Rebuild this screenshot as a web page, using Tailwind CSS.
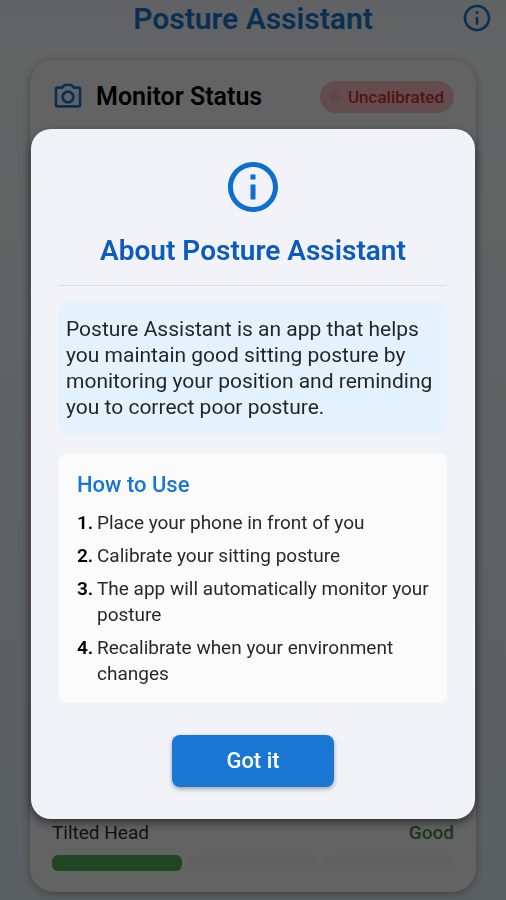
<!DOCTYPE html>
<html lang="en">

<head>
    <meta charset="utf-8">
    <meta name="viewport" content="width=device-width, initial-scale=1">
    <title>Posture Assistant</title>
    <script src="https://cdn.jsdelivr.net/npm/@tailwindcss/browser@4"></script>
</head>

<body class="font-[Roboto,sans-serif] text-black">
    <div class="min-h-screen flex flex-col bg-linear-to-b from-[#fafafa] to-[#e1eef2]">
        <header class="relative flex items-start justify-center h-[52px] bg-linear-to-b from-[#eef4fa] to-[#fafbfc]">
            <h1 class="text-[30px] leading-[38px] font-semibold text-[#1976d2]">Posture Assistant</h1>
            <button type="button" aria-label="About" class="absolute right-[13px] top-0.5">
                <svg class="size-8 text-[#1976d2]" viewBox="0 0 24 24" fill="currentColor">
                    <path d="M11 7h2v2h-2zm0 4h2v6h-2zm1-9C6.48 2 2 6.48 2 12s4.48 10 10 10 10-4.48 10-10S17.52 2 12 2zm0 18c-4.41 0-8-3.59-8-8s3.59-8 8-8 8 3.59 8 8-3.59 8-8 8z"></path>
                </svg>
            </button>
        </header>

        <main class="flex-1 flex flex-col px-[30px] pt-2 pb-2">
            <section class="flex-1 flex flex-col rounded-3xl bg-[#f8f8fb] shadow-[0_2px_8px_rgba(0,0,0,0.3)] px-[22px] py-[21px]">
                <div class="flex items-center">
                    <svg class="size-8 text-[#1976d2]" viewBox="0 0 24 24" fill="currentColor">
                        <path d="M14.12 4l1.83 2H20v12H4V6h4.05l1.83-2h4.24M15 2H9L7.17 4H4c-1.1 0-2 .9-2 2v12c0 1.1.9 2 2 2h16c1.1 0 2-.9 2-2V6c0-1.1-.9-2-2-2h-3.17L15 2zm-3 7c1.65 0 3 1.35 3 3s-1.35 3-3 3-3-1.35-3-3 1.35-3 3-3m0-2c-2.76 0-5 2.24-5 5s2.24 5 5 5 5-2.24 5-5-2.24-5-5-5z"></path>
                    </svg>
                    <h2 class="ml-3 text-[25px] leading-8 font-semibold">Monitor Status</h2>
                    <span class="ml-auto flex items-center gap-2 rounded-full bg-[#f8bfc3] px-2.5 py-1 text-[17px] leading-6 font-medium text-[#d32f2f]">
                        <span class="size-2.5 rounded-full bg-[#eeaeb2]"></span>
                        Uncalibrated
                    </span>
                </div>

                <div class="mt-auto">
                    <div class="flex justify-between text-[19px] leading-6">
                        <span class="text-black/85">Tilted Head</span>
                        <span class="font-medium text-[#388e3c]">Good</span>
                    </div>
                    <div class="mt-2.5 grid grid-cols-3 gap-1.5">
                        <div class="h-4 rounded-md bg-[#4caf50]"></div>
                        <div class="h-4 rounded-md bg-[#f3f3f3]"></div>
                        <div class="h-4 rounded-md bg-[#f3f3f3]"></div>
                    </div>
                </div>
            </section>
        </main>
    </div>

    <!-- About dialog -->
    <div class="fixed inset-0 flex items-center justify-center bg-black/60 px-[31px] pt-12">
        <div role="dialog" aria-modal="true" aria-labelledby="about-title"
            class="w-full rounded-[20px] bg-[#f2f3f9] px-7 pt-[30px] pb-8 shadow-[0_4px_10px_rgba(0,0,0,0.5)]">
            <svg class="mx-auto size-[60px] -my-0.5 text-[#0d6fd0]" viewBox="0 0 24 24" fill="currentColor">
                <path d="M11 7h2v2h-2zm0 4h2v6h-2zm1-9C6.48 2 2 6.48 2 12s4.48 10 10 10 10-4.48 10-10S17.52 2 12 2zm0 18c-4.41 0-8-3.59-8-8s3.59-8 8-8 8 3.59 8 8-3.59 8-8 8z"></path>
            </svg>
            <h2 id="about-title" class="mt-4 text-center text-[28px] leading-10 font-semibold text-[#0d5bbd]">About Posture Assistant</h2>
            <hr class="mt-3.5 border-[#dcdde2]">

            <p class="mt-[17px] rounded-xl bg-[#e3f2fd] px-[7px] py-[13px] text-[21px] leading-[26px] text-black/85">
                Posture Assistant is an app that helps you maintain good sitting posture by monitoring your position and reminding you to correct poor posture.
            </p>

            <div class="mt-5 rounded-lg bg-[#fbfbfb] px-[18px] py-4">
                <h3 class="text-[22px] leading-8 font-medium text-[#1976d2]">How to Use</h3>
                <ol class="mt-[9px] flex flex-col gap-[7px] text-[19px] leading-[26px] text-black/85">
                    <li class="flex"><b class="w-5 shrink-0 font-semibold text-black">1.</b>Place your phone in front of you</li>
                    <li class="flex"><b class="w-5 shrink-0 font-semibold text-black">2.</b>Calibrate your sitting posture</li>
                    <li class="flex"><b class="w-5 shrink-0 font-semibold text-black">3.</b>The app will automatically monitor your posture</li>
                    <li class="flex"><b class="w-5 shrink-0 font-semibold text-black">4.</b>Recalibrate when your environment changes</li>
                </ol>
            </div>

            <button type="button"
                class="mx-auto mt-8 block rounded-lg bg-[#1976d2] px-[54px] py-2.5 text-[22px] leading-8 font-medium text-white shadow-[0_2px_4px_rgba(0,0,0,0.35)]">
                Got it
            </button>
        </div>
    </div>
</body>

</html>
